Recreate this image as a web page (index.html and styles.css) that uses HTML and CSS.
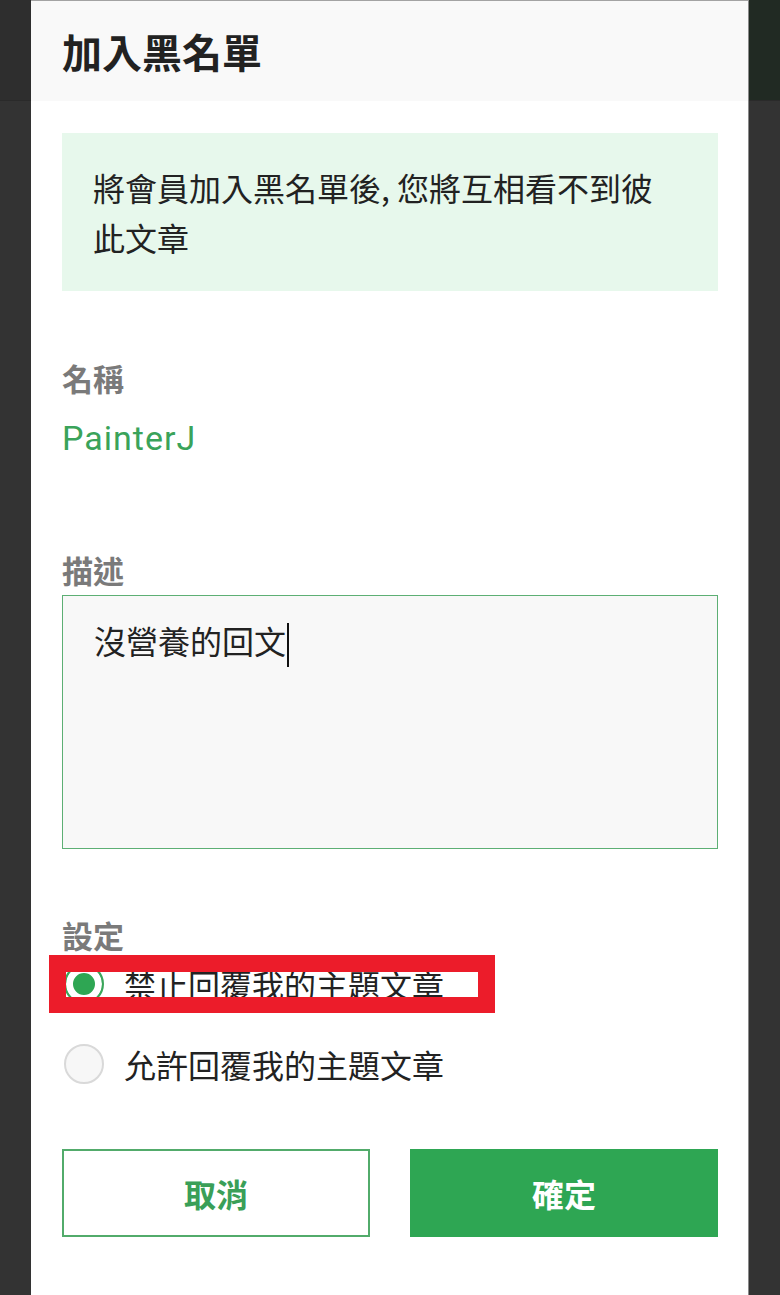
FILE: index.html
```html
<!DOCTYPE html>
<html lang="zh-Hant">
<head>
<meta charset="utf-8">
<title>加入黑名單</title>
<link rel="stylesheet" href="styles.css">
</head>
<body>
<div class="screen">
  <div class="side side-left"><div class="side-top"></div></div>
  <div class="modal">
    <div class="modal-header"><h1 class="title">加入黑名單</h1></div>
    <div class="modal-body">
      <div class="notice">將會員加入黑名單後, 您將互相看不到彼此文章</div>
      <div class="label label-name">名稱</div>
      <div class="name">PainterJ</div>
      <div class="label label-desc">描述</div>
      <div class="textbox">沒營養的回文<span class="caret"></span></div>
      <div class="label label-settings">設定</div>
      <div class="options">
        <div class="option option-first">
          <span class="radio radio-checked"></span>
          <span class="option-text">禁止回覆我的主題文章</span>
          <div class="highlight"></div>
        </div>
        <div class="option option-second">
          <span class="radio"></span>
          <span class="option-text">允許回覆我的主題文章</span>
        </div>
      </div>
      <div class="actions">
        <button class="btn btn-outline">取消</button>
        <button class="btn btn-primary">確定</button>
      </div>
    </div>
  </div>
  <div class="side side-right"><div class="side-top"></div></div>
</div>
</body>
</html>
```
FILE: styles.css
```css
html, body {
  margin: 0;
  padding: 0;
  background: #333333;
  overflow: hidden;
}

.screen {
  display: grid;
  grid-template-columns: 31px 718px 31px;
  width: 780px;
  height: 1295px;
  font-family: "Noto Sans CJK TC", "Noto Sans", sans-serif;
  color: #222222;
}

.side {
  background: #333333;
}

.side-top {
  height: 101px;
  border-bottom: 1px solid #2a2a2a;
  box-sizing: border-box;
}

.side-left .side-top {
  background: #2e2e2e;
}

.side-right .side-top {
  background: #212a23;
}

.modal {
  background: #ffffff;
  height: 1295px;
  overflow: hidden;
  border-top: 1px solid #a3a3a3;
  border-right: 1px solid #8a8a8a;
  box-sizing: border-box;
}

.modal-header {
  height: 100px;
  background: #f9f9f9;
  display: flex;
  align-items: center;
  padding-left: 31px;
}

.title {
  margin: 0;
  font-size: 40px;
  font-weight: 700;
  line-height: 50px;
  color: #222222;
}

.modal-body {
  padding: 32px 30px 0 31px;
}

.notice {
  background: #e7f8ec;
  font-size: 32px;
  line-height: 50px;
  padding: 29px 42px 29px 31px;
  color: #222222;
}

.label {
  font-size: 31px;
  font-weight: 700;
  line-height: 40px;
  color: #7a7a7a;
}

.label-name {
  margin-top: 67px;
}

.name {
  margin-top: 18px;
  font-family: Roboto, "Noto Sans", sans-serif;
  font-size: 34px;
  line-height: 44px;
  letter-spacing: 1px;
  color: #3aa35a;
}

.label-desc {
  margin-top: 90px;
}

.textbox {
  margin-top: 5px;
  height: 254px;
  box-sizing: border-box;
  border: 1px solid #5daf74;
  background: #f8f8f8;
  padding: 24px 31px;
  font-size: 32px;
  line-height: 40px;
  color: #222222;
}

.caret {
  display: inline-block;
  width: 2px;
  height: 44px;
  background: #111111;
  vertical-align: middle;
  margin-left: 1px;
}

.label-settings {
  margin-top: 66px;
}

.options {
  display: flex;
  flex-direction: column;
  gap: 22px;
}

.option {
  position: relative;
  display: flex;
  align-items: center;
  height: 58px;
  gap: 20px;
  font-size: 32px;
  color: #222222;
}

.radio {
  width: 40px;
  height: 40px;
  border-radius: 50%;
  box-sizing: border-box;
  margin-left: 2px;
  border: 2px solid #d9d9d9;
  background: #f7f7f7;
  flex: none;
}

.radio-checked {
  border: 2px solid #3aa55a;
  background: #2ea653;
  box-shadow: inset 0 0 0 7px #ffffff;
}

.highlight {
  position: absolute;
  top: 0;
  left: -13px;
  width: 446px;
  height: 58px;
  box-sizing: border-box;
  border-style: solid;
  border-color: #ec1c2a;
  border-width: 17px 17px 16px 17px;
}

.actions {
  margin-top: 56px;
  display: grid;
  grid-template-columns: 1fr 1fr;
  gap: 40px;
}

.btn {
  height: 88px;
  font-family: "Noto Sans CJK TC", "Noto Sans", sans-serif;
  font-size: 32px;
  font-weight: 700;
  border-radius: 0;
  cursor: pointer;
  box-sizing: border-box;
  padding: 0;
}

.btn-outline {
  background: #ffffff;
  border: 2px solid #52ab6b;
  color: #3a9f58;
}

.btn-primary {
  background: #2ea653;
  border: none;
  color: #ffffff;
}
```
